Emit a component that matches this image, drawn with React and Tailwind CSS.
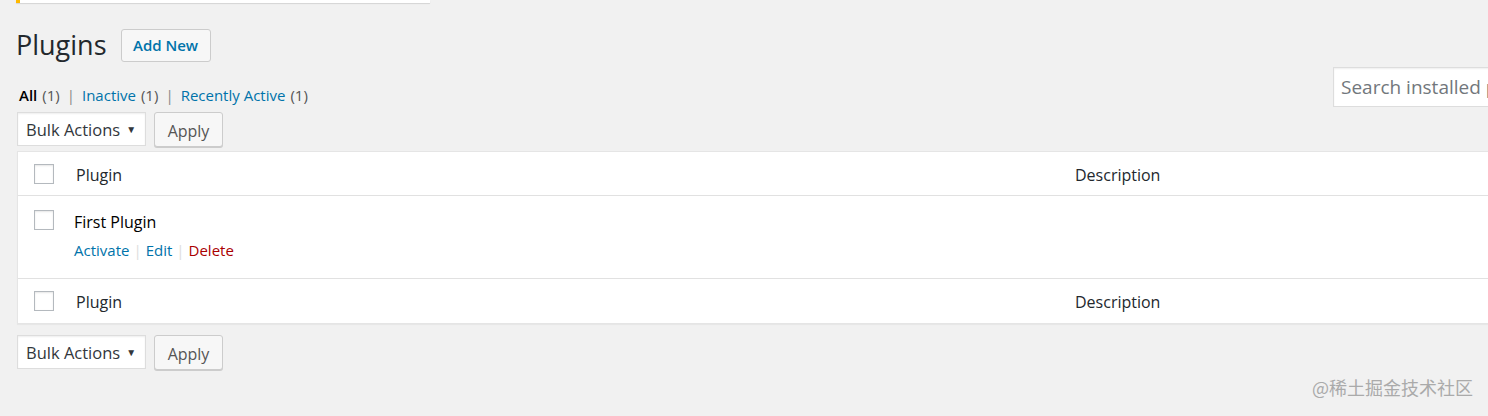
import React from "react";

function Checkbox() {
  return <div className="w-[20px] h-[20px] bg-white border border-[#b4b9be] shadow-[inset_0_1px_2px_rgba(0,0,0,0.1)]" />;
}

function BulkBar({ className = "" }) {
  return (
    <div className={"flex items-start gap-[8px] " + className}>
      <div className="h-[34px] w-[129px] bg-white border border-[#ddd] shadow-[inset_0_1px_2px_rgba(0,0,0,0.07)] flex items-center pl-[8px] pt-[2px] text-[#32373c] text-[16.5px]">
        <span>Bulk Actions</span>
        <span className="ml-[6px] text-[10px] leading-none -mt-[3px]">▼</span>
      </div>
      <div className="h-[35px] w-[69px] bg-[#f7f7f7] border border-[#ccc] rounded-[3px] shadow-[0_1px_0_#ccc] flex items-center justify-center text-[#555] text-[16px] pt-[3px]">
        Apply
      </div>
    </div>
  );
}

export default function App() {
  return (
    <div
      className="w-[1488px] h-[416px] overflow-hidden bg-[#f1f1f1] text-[#23282d] relative"
      style={{ fontFamily: '"Open Sans", "Noto Sans", sans-serif' }}
    >
      <div className="w-[1560px] pl-[16px]">
        <div className="h-[3px] w-[414px] bg-white border-l-4 border-[#ffb900] shadow-[0_1px_1px_rgba(0,0,0,0.12)]" />
        <div className="flex items-center mt-[26px] h-[33px]">
          <h1 className="text-[27px] leading-none font-normal -mt-[2px]">Plugins</h1>
          <div className="ml-[14px] h-[33px] w-[90px] border border-[#ccc] bg-[#f7f7f7] rounded-[3px] flex items-center justify-center text-[#0073aa] text-[15px] font-semibold">
            Add New
          </div>
        </div>
        <div className="flex items-start justify-between">
          <div className="flex flex-col">
            <div className="mt-[22px] ml-[3px] h-[22px] flex items-center text-[15px] text-[#555]">
              <span className="text-[#000] font-semibold">All</span>
              <span className="ml-[5px]">(1)</span>
              <span className="mx-[7px] text-[#888]">|</span>
              <span className="text-[#0073aa]">Inactive</span>
              <span className="ml-[5px]">(1)</span>
              <span className="mx-[7px] text-[#888]">|</span>
              <span className="text-[#0073aa]">Recently Active</span>
              <span className="ml-[5px]">(1)</span>
            </div>
            <BulkBar className="mt-[6px] ml-[1px]" />
          </div>
          <div className="mt-[5px] h-[40px] w-[227px] bg-white border border-[#ddd] shadow-[inset_0_1px_2px_rgba(0,0,0,0.07)] flex items-center pl-[7px] text-[19px] text-[#72777c] whitespace-nowrap overflow-hidden">
            Search installed plugins...
          </div>
        </div>
        <div className="mt-[4px] ml-[1px] bg-white border border-[#e5e5e5] shadow-[0_1px_1px_rgba(0,0,0,0.04)] text-[16px]">
          <div className="flex items-center h-[44px] border-b border-[#e1e1e1]">
            <div className="w-[57px] pl-[16px]"><Checkbox /></div>
            <div className="w-[1000px] pl-[1px] pt-[2px]">Plugin</div>
            <div className="pt-[2px]">Description</div>
          </div>
          <div className="flex h-[83px] border-b border-[#e1e1e1]">
            <div className="w-[57px] pl-[16px] pt-[14px]"><Checkbox /></div>
            <div className="w-[1000px] pt-[14px]">
              <div className="text-[16px] text-[#000] -ml-[1px]">First Plugin</div>
              <div className="mt-[5px] -ml-[1px] flex items-center text-[15px]">
                <span className="text-[#0073aa]">Activate</span>
                <span className="mx-[4px] text-[#ddd]">|</span>
                <span className="text-[#0073aa]">Edit</span>
                <span className="mx-[4px] text-[#ddd]">|</span>
                <span className="text-[#a00]">Delete</span>
              </div>
            </div>
            <div />
          </div>
          <div className="flex items-center h-[44px]">
            <div className="w-[57px] pl-[16px]"><Checkbox /></div>
            <div className="w-[1000px] pl-[1px] pt-[2px]">Plugin</div>
            <div className="pt-[2px]">Description</div>
          </div>
        </div>
        <BulkBar className="mt-[11px] ml-[1px]" />
      </div>
      <div
        className="absolute right-[15px] bottom-[15px] text-[18px] text-[#aaa]"
        style={{ fontFamily: '"Noto Sans CJK SC", sans-serif' }}
      >
        @稀土掘金技术社区
      </div>
    </div>
  );
}
